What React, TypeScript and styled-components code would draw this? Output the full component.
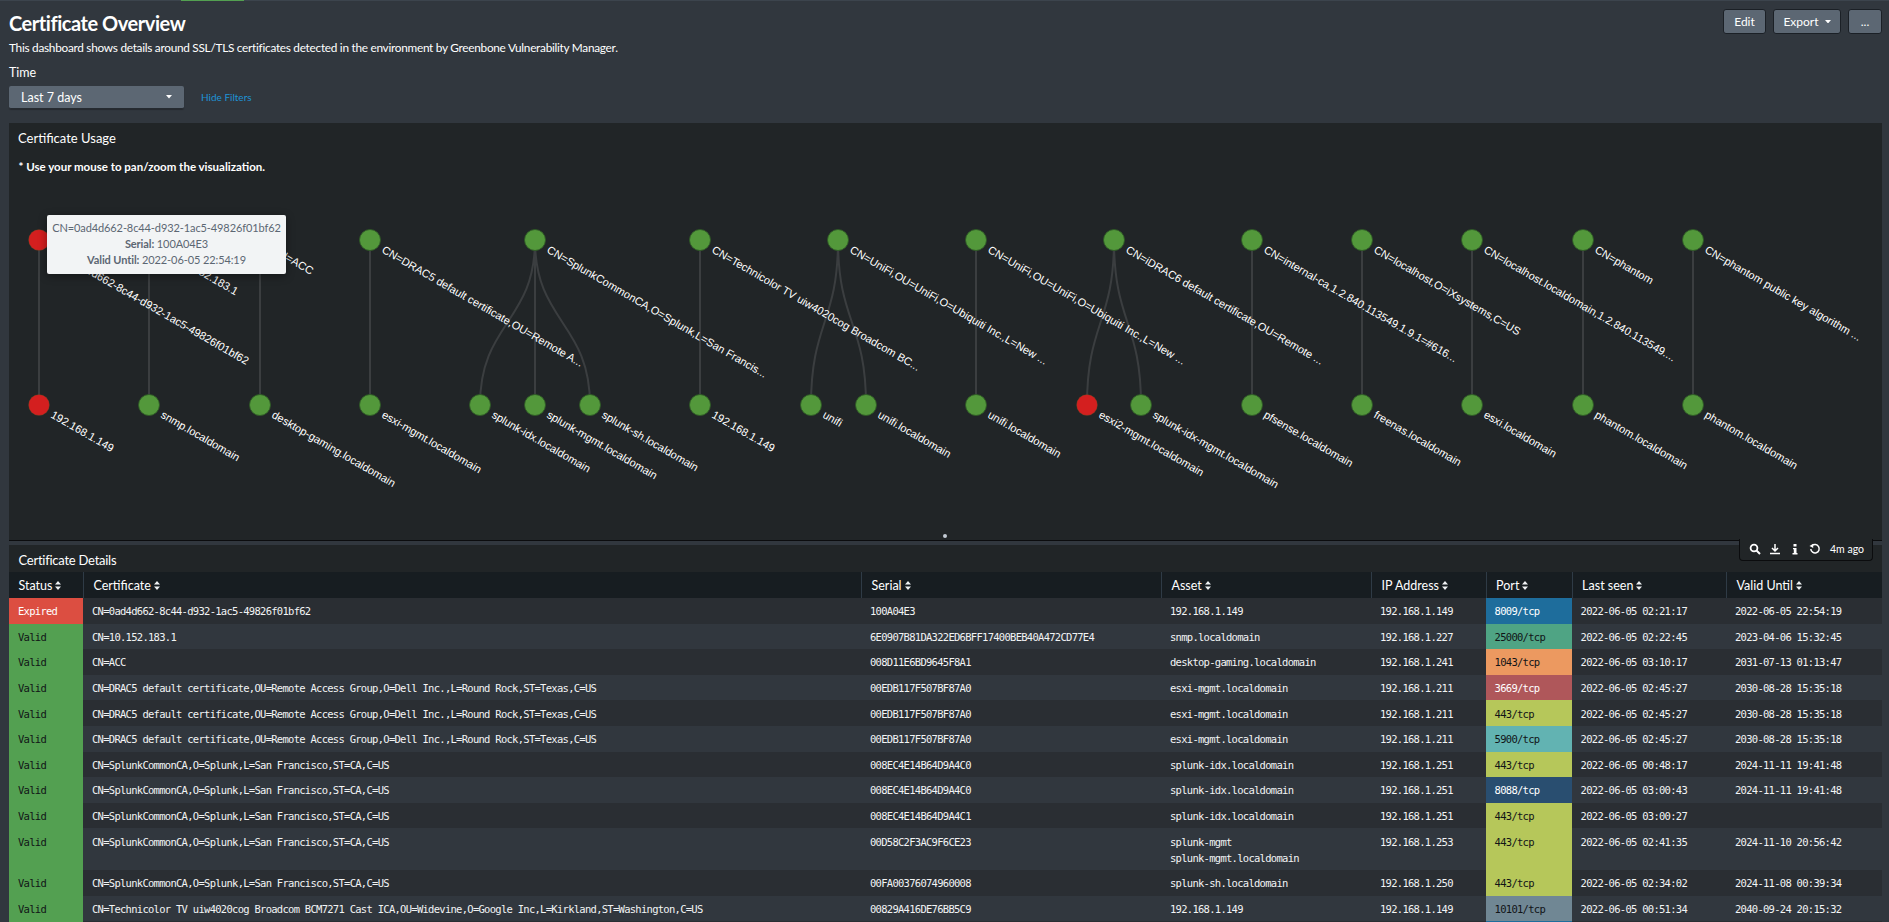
import React from 'react';
import styled, { createGlobalStyle } from 'styled-components';

const Global = createGlobalStyle`
  html, body { margin: 0; padding: 0; height: 100%; background: #31373e; overflow: hidden; }
  body { font-family: Lato, "Open Sans", sans-serif; color: #fff; }
  * { box-sizing: border-box; }
`;

const Page = styled.div`
  width: 1889px;
  height: 922px;
  overflow: hidden;
  background: #31373e;
`;
const TopBar = styled.div`
  height: 1px;
  background: #3c444d;
`;
const TopMarker = styled.div`
  width: 63px;
  height: 1px;
  margin-left: 181px;
  background: #53a051;
`;
const Content = styled.div`
  padding: 0 7px 0 9px;
`;
const Header = styled.header`
  display: flex;
  justify-content: space-between;
  align-items: flex-start;
  padding-top: 8px;
`;
const Title = styled.h1`
  margin: 0;
  font-size: 20px;
  line-height: 28px;
  letter-spacing: -0.45px;
  font-weight: 700;
  color: #fff;
`;
const Description = styled.p`
  margin: 3px 0 0;
  font-size: 11.8px;
  line-height: 16px;
  letter-spacing: -0.27px;
  color: #fff;
`;
const Actions = styled.div`
  display: flex;
  gap: 7px;
`;
const ActionButton = styled.button`
  height: 25px;
  width: ${(p: { $w: number }) => p.$w}px;
  display: flex;
  align-items: center;
  justify-content: center;
  gap: 6px;
  padding: 0;
  font: 12px Lato, sans-serif;
  color: #fff;
  background: #5c6773;
  border: 1px solid #1b2026;
  border-radius: 3px;
`;
const FilterLabel = styled.div`
  margin-top: 9px;
  font-size: 12.5px;
  line-height: 16px;
`;
const FilterRow = styled.div`
  display: flex;
  align-items: center;
  gap: 17px;
  margin: 5px 0 14px;
`;
const Select = styled.div`
  width: 175px;
  height: 23px;
  display: flex;
  align-items: center;
  justify-content: space-between;
  padding: 0 12px 0 12px;
  font-size: 12.5px;
  background: #5c6773;
  border-bottom: 1px solid #262b31;
  border-radius: 2px;
  box-shadow: 0 1px 1px rgba(0, 0, 0, 0.25);
`;
const HideLink = styled.a`
  font-size: 10px;
  line-height: 20px;
  margin-top: -2px;
  color: #1e93d6;
`;
const UsagePanel = styled.section`
  position: relative;
  height: 418px;
  background: #212527;
  border-bottom: 1px solid #0b0c0e;
`;
const PanelTitle = styled.h2`
  margin: 0;
  padding: 7px 9px 0;
  font-size: 13px;
  line-height: 16px;
  font-weight: 400;
  color: #fff;
`;
const Note = styled.div`
  margin-top: 13px;
  padding: 0 9.5px;
  font-size: 11.5px;
  line-height: 16px;
  font-weight: 700;
`;
const Chart = styled.svg`
  display: block;
  position: absolute;
  left: 0;
  top: 57px;
`;
const NodeLabel = styled.text`
  font-family: "Liberation Sans", Arial, sans-serif;
  font-size: 11.05px;
  fill: #fff;
`;
const Tooltip = styled.div`
  position: absolute;
  left: 38px;
  top: 92px;
  width: 239px;
  height: 59px;
  padding-top: 5px;
  text-align: center;
  white-space: nowrap;
  font-size: 11px;
  line-height: 16px;
  letter-spacing: -0.1px;
  color: #5c6773;
  background: #f2f4f5;
  border-radius: 2px;
  box-shadow: 0 2px 8px rgba(0, 0, 0, 0.4);
`;
const ResizeDot = styled.div`
  position: absolute;
  left: 934px;
  top: 411px;
  width: 4px;
  height: 4px;
  border-radius: 50%;
  background: #c3cbd4;
`;
const Toolbar = styled.div`
  position: absolute;
  right: 9px;
  top: 416px;
  width: 134px;
  height: 22px;
  z-index: 2;
  display: flex;
  align-items: center;
  padding: 0 8px 1px 9px;
  font-size: 10.5px;
  color: #fff;
  background: #212527;
  border: 1px solid #0b0c0e;
  border-top: none;
  border-radius: 0 0 4px 4px;
`;
const ToolIcon = styled.svg`
  flex: none;
  width: 12px;
  height: 12px;
  margin-right: 8px;
`;
const ToolTime = styled.span`
  flex: none;
  margin-left: auto;
  white-space: nowrap;
`;
const DetailsPanel = styled.section`
  margin-top: 4px;
  background: #212527;
`;
const DetailsTitle = styled.h2`
  margin: 0;
  height: 27px;
  padding: 7px 9.5px 0;
  font-size: 13px;
  line-height: 16px;
  letter-spacing: -0.25px;
  font-weight: 400;
  color: #fff;
`;
const COLS = '74px 778px 300px 210px 114.6px 86px 154.4px 156px';
const HeaderRow = styled.div`
  display: grid;
  grid-template-columns: ${COLS};
  height: 26px;
  background: #171d21;
`;
const HeaderCell = styled.div`
  display: flex;
  align-items: center;
  gap: 3px;
  padding-left: 9.5px;
  font-size: 12.5px;
  color: #fff;
  & + & { border-left: 1px solid #2f3b46; }
`;
const BodyRow = styled.div<{ $odd: boolean }>`
  display: grid;
  grid-template-columns: ${COLS};
  background: ${(p) => (p.$odd ? '#2a2e33' : '#31373e')};
`;
const Cell = styled.div`
  padding: 5.3px 9px 4.3px;
  min-height: 25.6px;
  font-family: "DejaVu Sans Mono", "Liberation Mono", monospace;
  font-size: 10.5px;
  letter-spacing: -0.72px;
  line-height: 16px;
  white-space: pre;
  color: #f2f4f5;
`;
const ColorCell = styled(Cell)<{ $bg: string; $fg: string }>`
  background: ${(p) => p.$bg};
  color: ${(p) => p.$fg};
`;

const Sort = () => (
  <svg width="6" height="9" viewBox="0 0 6 9" aria-hidden="true">
    <path d="M3 0 L6 3.6 H0 Z M3 9 L0 5.4 H6 Z" fill="#f0f2f4" />
  </svg>
);

const Caret = () => (
  <svg width="6" height="3.5" viewBox="0 0 7 4" aria-hidden="true">
    <path d="M0 0 H7 L3.5 4 Z" fill="#fff" />
  </svg>
);

const GREEN = '#53983b';
const RED = '#d41f1f';
const TOP_Y = 240;
const BOTTOM_Y = 405;

const tops: { x: number; color: string; label: string; to: number[] }[] = [
  { x: 39, color: RED, label: 'CN=0ad4d662-8c44-d932-1ac5-49826f01bf62', to: [39] },
  { x: 149, color: GREEN, label: 'CN=10.152.183.1', to: [149] },
  { x: 260, color: GREEN, label: 'CN=ACC', to: [260] },
  { x: 370, color: GREEN, label: 'CN=DRAC5 default certificate,OU=Remote A...', to: [370] },
  { x: 535, color: GREEN, label: 'CN=SplunkCommonCA,O=Splunk,L=San Francis...', to: [480, 535, 590] },
  { x: 700, color: GREEN, label: 'CN=Technicolor TV uiw4020cog Broadcom BC...', to: [700] },
  { x: 838, color: GREEN, label: 'CN=UniFi,OU=UniFi,O=Ubiquiti Inc.,L=New ...', to: [811, 866] },
  { x: 976, color: GREEN, label: 'CN=UniFi,OU=UniFi,O=Ubiquiti Inc.,L=New ...', to: [976] },
  { x: 1114, color: GREEN, label: 'CN=iDRAC6 default certificate,OU=Remote ...', to: [1087, 1141] },
  { x: 1252, color: GREEN, label: 'CN=internal-ca,1.2.840.113549.1.9.1=#616...', to: [1252] },
  { x: 1362, color: GREEN, label: 'CN=localhost,O=iXsystems,C=US', to: [1362] },
  { x: 1472, color: GREEN, label: 'CN=localhost.localdomain,1.2.840.113549....', to: [1472] },
  { x: 1583, color: GREEN, label: 'CN=phantom', to: [1583] },
  { x: 1693, color: GREEN, label: 'CN=phantom public key algorithm ...', to: [1693] },
];

const bottoms: { x: number; color: string; label: string }[] = [
  { x: 39, color: RED, label: '192.168.1.149' },
  { x: 149, color: GREEN, label: 'snmp.localdomain' },
  { x: 260, color: GREEN, label: 'desktop-gaming.localdomain' },
  { x: 370, color: GREEN, label: 'esxi-mgmt.localdomain' },
  { x: 480, color: GREEN, label: 'splunk-idx.localdomain' },
  { x: 535, color: GREEN, label: 'splunk-mgmt.localdomain' },
  { x: 590, color: GREEN, label: 'splunk-sh.localdomain' },
  { x: 700, color: GREEN, label: '192.168.1.149' },
  { x: 811, color: GREEN, label: 'unifi' },
  { x: 866, color: GREEN, label: 'unifi.localdomain' },
  { x: 976, color: GREEN, label: 'unifi.localdomain' },
  { x: 1087, color: RED, label: 'esxi2-mgmt.localdomain' },
  { x: 1141, color: GREEN, label: 'splunk-idx-mgmt.localdomain' },
  { x: 1252, color: GREEN, label: 'pfsense.localdomain' },
  { x: 1362, color: GREEN, label: 'freenas.localdomain' },
  { x: 1472, color: GREEN, label: 'esxi.localdomain' },
  { x: 1583, color: GREEN, label: 'phantom.localdomain' },
  { x: 1693, color: GREEN, label: 'phantom.localdomain' },
];

const Node = ({ x, y, color, label }: { x: number; y: number; color: string; label: string }) => (
  <g>
    <circle cx={x} cy={y} r={10.5} fill={color} stroke="#2f5a26" strokeOpacity={color === GREEN ? 0.9 : 0.3} strokeWidth={1} />
    <NodeLabel transform={`translate(${x + 11} ${y + 12}) rotate(30)`}>{label}</NodeLabel>
  </g>
);

type Row = {
  status: string; cert: string; serial: string; asset: string; ip: string;
  port: string; bg: string; fg: string; seen: string; until: string;
};
const DARK = '#111417';
const WHITE = '#ffffff';
const DRAC = 'CN=DRAC5 default certificate,OU=Remote Access Group,O=Dell Inc.,L=Round Rock,ST=Texas,C=US';
const SPL = 'CN=SplunkCommonCA,O=Splunk,L=San Francisco,ST=CA,C=US';
const LIME = '#b6c75a';
const rows: Row[] = [
  { status: 'Expired', cert: 'CN=0ad4d662-8c44-d932-1ac5-49826f01bf62', serial: '100A04E3', asset: '192.168.1.149', ip: '192.168.1.149', port: '8009/tcp', bg: '#1e6d9c', fg: WHITE, seen: '2022-06-05 02:21:17', until: '2022-06-05 22:54:19' },
  { status: 'Valid', cert: 'CN=10.152.183.1', serial: '6E0907B81DA322ED6BFF17400BEB40A472CD77E4', asset: 'snmp.localdomain', ip: '192.168.1.227', port: '25000/tcp', bg: '#4fa484', fg: DARK, seen: '2022-06-05 02:22:45', until: '2023-04-06 15:32:45' },
  { status: 'Valid', cert: 'CN=ACC', serial: '008D11E6BD9645F8A1', asset: 'desktop-gaming.localdomain', ip: '192.168.1.241', port: '1043/tcp', bg: '#ec9960', fg: DARK, seen: '2022-06-05 03:10:17', until: '2031-07-13 01:13:47' },
  { status: 'Valid', cert: DRAC, serial: '00EDB117F507BF87A0', asset: 'esxi-mgmt.localdomain', ip: '192.168.1.211', port: '3669/tcp', bg: '#af575a', fg: WHITE, seen: '2022-06-05 02:45:27', until: '2030-08-28 15:35:18' },
  { status: 'Valid', cert: DRAC, serial: '00EDB117F507BF87A0', asset: 'esxi-mgmt.localdomain', ip: '192.168.1.211', port: '443/tcp', bg: LIME, fg: DARK, seen: '2022-06-05 02:45:27', until: '2030-08-28 15:35:18' },
  { status: 'Valid', cert: DRAC, serial: '00EDB117F507BF87A0', asset: 'esxi-mgmt.localdomain', ip: '192.168.1.211', port: '5900/tcp', bg: '#62b3b2', fg: DARK, seen: '2022-06-05 02:45:27', until: '2030-08-28 15:35:18' },
  { status: 'Valid', cert: SPL, serial: '008EC4E14B64D9A4C0', asset: 'splunk-idx.localdomain', ip: '192.168.1.251', port: '443/tcp', bg: LIME, fg: DARK, seen: '2022-06-05 00:48:17', until: '2024-11-11 19:41:48' },
  { status: 'Valid', cert: SPL, serial: '008EC4E14B64D9A4C0', asset: 'splunk-idx.localdomain', ip: '192.168.1.251', port: '8088/tcp', bg: '#294e70', fg: WHITE, seen: '2022-06-05 03:00:43', until: '2024-11-11 19:41:48' },
  { status: 'Valid', cert: SPL, serial: '008EC4E14B64D9A4C1', asset: 'splunk-idx.localdomain', ip: '192.168.1.251', port: '443/tcp', bg: LIME, fg: DARK, seen: '2022-06-05 03:00:27', until: '' },
  { status: 'Valid', cert: SPL, serial: '00D58C2F3AC9F6CE23', asset: 'splunk-mgmt\nsplunk-mgmt.localdomain', ip: '192.168.1.253', port: '443/tcp', bg: LIME, fg: DARK, seen: '2022-06-05 02:41:35', until: '2024-11-10 20:56:42' },
  { status: 'Valid', cert: SPL, serial: '00FA00376074960008', asset: 'splunk-sh.localdomain', ip: '192.168.1.250', port: '443/tcp', bg: LIME, fg: DARK, seen: '2022-06-05 02:34:02', until: '2024-11-08 00:39:34' },
  { status: 'Valid', cert: 'CN=Technicolor TV uiw4020cog Broadcom BCM7271 Cast ICA,OU=Widevine,O=Google Inc,L=Kirkland,ST=Washington,C=US', serial: '00829A416DE76BB5C9', asset: '192.168.1.149', ip: '192.168.1.149', port: '10101/tcp', bg: '#708794', fg: DARK, seen: '2022-06-05 00:51:34', until: '2040-09-24 20:15:32' },
];

const COLUMNS = ['Status', 'Certificate', 'Serial', 'Asset', 'IP Address', 'Port', 'Last seen', 'Valid Until'];

export default function App() {
  return (
    <Page>
      <Global />
      <TopBar><TopMarker /></TopBar>
      <Content>
        <Header>
          <div>
            <Title>Certificate Overview</Title>
            <Description>This dashboard shows details around SSL/TLS certificates detected in the environment by Greenbone Vulnerability Manager.</Description>
          </div>
          <Actions>
            <ActionButton $w={43}>Edit</ActionButton>
            <ActionButton $w={68}>Export <Caret /></ActionButton>
            <ActionButton $w={34}>...</ActionButton>
          </Actions>
        </Header>
        <FilterLabel>Time</FilterLabel>
        <FilterRow>
          <Select>Last 7 days <Caret /></Select>
          <HideLink>Hide Filters</HideLink>
        </FilterRow>
        <UsagePanel>
          <PanelTitle>Certificate Usage</PanelTitle>
          <Note>* Use your mouse to pan/zoom the visualization.</Note>
          <Chart width={1873} height={360} viewBox="9 180 1873 360">
            {tops.flatMap((t) =>
              t.to.map((b) => (
                <path
                  key={`${t.x}-${b}`}
                  d={`M${t.x} ${TOP_Y} C${t.x} ${(TOP_Y + BOTTOM_Y) / 2} ${b} ${(TOP_Y + BOTTOM_Y) / 2} ${b} ${BOTTOM_Y}`}
                  fill="none"
                  stroke="#3b3e40"
                  strokeWidth={2}
                />
              )),
            )}
            {tops.map((t) => <Node key={t.x} x={t.x} y={TOP_Y} color={t.color} label={t.label} />)}
            {bottoms.map((b) => <Node key={b.x} x={b.x} y={BOTTOM_Y} color={b.color} label={b.label} />)}
          </Chart>
          <Tooltip>
            <div>CN=0ad4d662-8c44-d932-1ac5-49826f01bf62</div>
            <div><b>Serial:</b> 100A04E3</div>
            <div><b>Valid Until:</b> 2022-06-05 22:54:19</div>
          </Tooltip>
          <ResizeDot />
          <Toolbar>
            <ToolIcon viewBox="0 0 12 12"><circle cx="5" cy="5" r="3.4" fill="none" stroke="#fff" strokeWidth="1.8" /><path d="M7.5 7.5 L11 11" stroke="#fff" strokeWidth="2" /></ToolIcon>
            <ToolIcon viewBox="0 0 12 12"><path d="M6 1 V7.5 M3 5 L6 8 L9 5 M1 10.5 H11" fill="none" stroke="#fff" strokeWidth="1.5" /></ToolIcon>
            <ToolIcon viewBox="0 0 12 12"><path d="M4.5 1 H7.5 V3.5 H4.5 Z M4 5 H7.5 V10 H8.5 V11.5 H3.5 V10 H4.8 V6.2 H4 Z" fill="#fff" /></ToolIcon>
            <ToolIcon viewBox="0 0 12 12"><path d="M3 2.8 A4.2 4.2 0 1 1 1.8 6" fill="none" stroke="#fff" strokeWidth="1.5" /><path d="M0.5 3 L4.2 0.8 L4.2 5 Z" fill="#fff" /></ToolIcon>
            <ToolTime>4m ago</ToolTime>
          </Toolbar>
        </UsagePanel>
        <DetailsPanel>
          <DetailsTitle>Certificate Details</DetailsTitle>
          <HeaderRow>
            {COLUMNS.map((c) => <HeaderCell key={c}>{c} <Sort /></HeaderCell>)}
          </HeaderRow>
          {rows.map((r, i) => (
            <BodyRow key={i} $odd={i % 2 === 0}>
              <ColorCell $bg={r.status === 'Expired' ? '#dc4e41' : '#53a051'} $fg={r.status === 'Expired' ? WHITE : DARK}>{r.status}</ColorCell>
              <Cell>{r.cert}</Cell>
              <Cell>{r.serial}</Cell>
              <Cell>{r.asset}</Cell>
              <Cell>{r.ip}</Cell>
              <ColorCell $bg={r.bg} $fg={r.fg}>{r.port}</ColorCell>
              <Cell>{r.seen}</Cell>
              <Cell>{r.until}</Cell>
            </BodyRow>
          ))}
          <BodyRow $odd>
            <ColorCell $bg="#53a051" $fg={DARK} />
            <Cell /><Cell /><Cell /><Cell />
            <ColorCell $bg="#1e6d9c" $fg={WHITE} />
            <Cell /><Cell />
          </BodyRow>
        </DetailsPanel>
      </Content>
    </Page>
  );
}
